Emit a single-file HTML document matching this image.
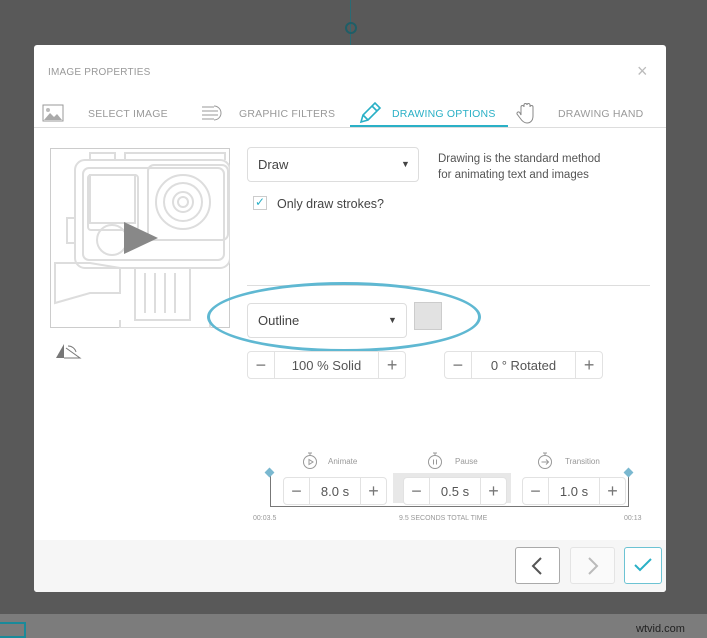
<!DOCTYPE html><html><head><style>
body{margin:0;width:707px;height:638px;background:#595959;position:relative;overflow:hidden;font-family:"Liberation Sans",sans-serif}
.a{position:absolute}
.modal{left:34px;top:45px;width:632px;height:547px;background:#fff;border-radius:3px}
.foot{left:34px;top:540px;width:632px;height:52px;background:#f6f6f6;border-radius:0 0 3px 3px}
.t{font-size:10px;color:#999;letter-spacing:.2px}
.box{border:1px solid #ddd;border-radius:4px;background:#fff}
.step{border:1px solid #e2e2e2;border-radius:4px;background:#fff;height:26px;display:flex;font-size:13px;color:#555}
.step span{display:flex;align-items:center;justify-content:center}
.sm{font-size:8px;color:#999}
</style></head><body>
<div class="a" style="left:0;top:614px;width:707px;height:24px;background:#7c7c7c"></div>
<div class="a" style="left:0;top:622px;width:26px;height:16px;border:2px solid #1a8a9a;border-left:none;box-sizing:border-box"></div>
<div class="a" style="left:636px;top:623px;font-size:11px;color:#222">wtvid.com</div>
<div class="a" style="left:350px;top:0;width:1px;height:45px;background:#2a6b75"></div>
<div class="a" style="left:345px;top:22px;width:8px;height:8px;border:2px solid #1f5e67;border-radius:50%"></div>
<div class="a modal"></div>
<div class="a foot"></div>
<div class="a t" style="left:48px;top:67px">IMAGE PROPERTIES</div>
<div class="a" style="left:637px;top:61px;font-size:18px;color:#bbb">×</div>
<div class="a" style="left:34px;top:127px;width:632px;height:1px;background:#ddd"></div>
<div class="a" style="left:350px;top:125px;width:158px;height:2px;background:#2ab0c6"></div>
<svg class="a" style="left:42px;top:104px" width="22" height="18"><rect x="1" y="1" width="20" height="16" fill="none" stroke="#999"/><path d="M2 16l6-7 4 4 3-3 5 6z" fill="#aaa"/><circle cx="6" cy="6" r="2" fill="#bbb"/></svg>
<div class="a t" style="left:88px;top:108px;font-size:10.5px">SELECT IMAGE</div>
<svg class="a" style="left:200px;top:104px" width="22" height="18"><path d="M2 3h12M2 7h16M2 11h16M2 15h12" stroke="#999"/><path d="M14 2a7 7 0 0 1 0 14" fill="none" stroke="#999"/></svg>
<div class="a t" style="left:239px;top:108px;font-size:10.5px">GRAPHIC FILTERS</div>
<svg class="a" style="left:358px;top:101px" width="24" height="24"><path d="M3 21l2-7 12-12 5 5-12 12z M5 14l5 5 M14 5l5 5" fill="none" stroke="#2ab0c6" stroke-width="1.6"/></svg>
<div class="a t" style="left:392px;top:108px;font-size:10.5px;color:#2ab0c6">DRAWING OPTIONS</div>
<svg class="a" style="left:516px;top:101px" width="22" height="24"><path d="M5 14V6a1.5 1.5 0 0 1 3 0V4a1.5 1.5 0 0 1 3 0v0a1.5 1.5 0 0 1 3 0v2a1.5 1.5 0 0 1 3 0v9c0 5-3 7-6 7s-5-2-7-5l-3-4a1.5 1.5 0 0 1 3-1z" fill="none" stroke="#888"/></svg>
<div class="a t" style="left:558px;top:108px;font-size:10.5px">DRAWING HAND</div>
<div class="a" style="left:50px;top:148px;width:180px;height:180px;border:1px solid #ccc;box-sizing:border-box"></div>
<svg class="a" style="left:50px;top:148px" width="180" height="180" fill="none" stroke="#ddd" stroke-width="2"><path d="M40 12v-7h25v7M75 12v-7h100v7"/><rect x="25" y="12" width="155" height="108" rx="10"/><rect x="33" y="20" width="141" height="92" rx="6"/><rect x="38" y="27" width="50" height="55" rx="3"/><rect x="40" y="27" width="45" height="48"/><rect x="98" y="17" width="80" height="75" rx="6"/><circle cx="133" cy="54" r="27"/><circle cx="133" cy="54" r="19"/><circle cx="133" cy="54" r="10"/><circle cx="133" cy="54" r="5"/><circle cx="62" cy="92" r="15"/><path d="M25 70h-8v25h8"/><path d="M5 115h35l30 5v25H40l-35 10z"/><path d="M85 120h55v52H85z M95 125v40M105 125v40M115 125v40M125 125v40"/><path d="M70 172v8h90v-8"/></svg>
<svg class="a" style="left:122px;top:220px" width="38" height="36"><path d="M2 2v32l34-16z" fill="#888"/></svg>
<svg class="a" style="left:54px;top:342px" width="28" height="18"><path d="M2 16l8-14v14z" fill="#777"/><path d="M10 16h16L12 6" fill="none" stroke="#777"/><path d="M14 4a8 8 0 0 1 8 6" fill="none" stroke="#777"/></svg>
<div class="a box" style="left:247px;top:147px;width:170px;height:33px"></div>
<div class="a" style="left:258px;top:157px;font-size:13px;color:#444">Draw</div>
<div class="a" style="left:401px;top:159px;font-size:9px;color:#444">▼</div>
<div class="a" style="left:438px;top:151px;font-size:11.5px;color:#555;line-height:16px">Drawing is the standard method<br>for animating text and images</div>
<div class="a" style="left:253px;top:196px;width:14px;height:14px;border:1px solid #ccc;box-sizing:border-box"></div>
<div class="a" style="left:255px;top:195px;font-size:12px;color:#2ab0c6">✓</div>
<div class="a" style="left:277px;top:197px;font-size:12.5px;color:#444">Only draw strokes?</div>
<div class="a" style="left:247px;top:285px;width:403px;height:1px;background:#ddd"></div>
<div class="a box" style="left:247px;top:303px;width:158px;height:33px"></div>
<div class="a" style="left:258px;top:313px;font-size:13px;color:#444">Outline</div>
<div class="a" style="left:388px;top:315px;font-size:9px;color:#444">▼</div>
<div class="a" style="left:414px;top:302px;width:26px;height:26px;background:#e2e2e2;border:1px solid #ccc"></div>
<div class="a" style="left:207px;top:282px;width:274px;height:70px;border:3px solid #5fb8d2;border-radius:50%;box-sizing:border-box"></div>
<div class="a step" style="left:247px;top:351px;width:157px"><span style="width:26px;font-size:18px;color:#777">−</span><span style="width:104px;border-left:1px solid #e2e2e2;border-right:1px solid #e2e2e2">100 % Solid</span><span style="width:26px;font-size:18px;color:#777">+</span></div>
<div class="a step" style="left:444px;top:351px;width:157px"><span style="width:26px;font-size:18px;color:#777">−</span><span style="width:104px;border-left:1px solid #e2e2e2;border-right:1px solid #e2e2e2">0 ° Rotated</span><span style="width:26px;font-size:18px;color:#777">+</span></div>
<div class="a" style="left:393px;top:473px;width:118px;height:30px;background:#e8e8e8"></div>
<div class="a" style="left:270px;top:474px;width:1px;height:32px;background:#777"></div>
<div class="a" style="left:628px;top:474px;width:1px;height:32px;background:#777"></div>
<div class="a" style="left:270px;top:506px;width:359px;height:1px;background:#777"></div>
<div class="a" style="left:266px;top:469px;width:7px;height:7px;background:#7ab8d0;transform:rotate(45deg)"></div>
<div class="a" style="left:625px;top:469px;width:7px;height:7px;background:#7ab8d0;transform:rotate(45deg)"></div>
<div class="a step" style="left:283px;top:477px;width:102px"><span style="width:25px;font-size:18px;color:#777">−</span><span style="width:50px;border-left:1px solid #e2e2e2;border-right:1px solid #e2e2e2">8.0 s</span><span style="width:25px;font-size:18px;color:#777">+</span></div>
<div class="a step" style="left:403px;top:477px;width:102px"><span style="width:25px;font-size:18px;color:#777">−</span><span style="width:50px;border-left:1px solid #e2e2e2;border-right:1px solid #e2e2e2">0.5 s</span><span style="width:25px;font-size:18px;color:#777">+</span></div>
<div class="a step" style="left:522px;top:477px;width:102px"><span style="width:25px;font-size:18px;color:#777">−</span><span style="width:50px;border-left:1px solid #e2e2e2;border-right:1px solid #e2e2e2">1.0 s</span><span style="width:25px;font-size:18px;color:#777">+</span></div>
<svg class="a" style="left:302px;top:452px" width="16" height="18" fill="none" stroke="#999"><circle cx="8" cy="10" r="6.5"/><path d="M6 1h4M8 1v2.5M7 7.5v5l4-2.5z"/></svg><div class="a sm" style="left:328px;top:457px">Animate</div>
<svg class="a" style="left:427px;top:452px" width="16" height="18" fill="none" stroke="#999"><circle cx="8" cy="10" r="6.5"/><path d="M6 1h4M8 1v2.5M6.5 7.5v5M9.5 7.5v5"/></svg><div class="a sm" style="left:455px;top:457px">Pause</div>
<svg class="a" style="left:537px;top:452px" width="16" height="18" fill="none" stroke="#999"><circle cx="8" cy="10" r="6.5"/><path d="M6 1h4M8 1v2.5M4.5 10h7M9 7.5l2.5 2.5-2.5 2.5"/></svg><div class="a sm" style="left:565px;top:457px">Transition</div>
<div class="a sm" style="left:253px;top:515px;font-size:7px">00:03.5</div>
<div class="a sm" style="left:399px;top:515px;font-size:7px">9.5 SECONDS TOTAL TIME</div>
<div class="a sm" style="left:624px;top:515px;font-size:7px">00:13</div>
<div class="a" style="left:515px;top:547px;width:45px;height:37px;border:1px solid #aaa;border-radius:3px;background:#fff;box-sizing:border-box"></div>
<svg class="a" style="left:530px;top:556px" width="14" height="20"><path d="M11 2l-8 8 8 8" fill="none" stroke="#555" stroke-width="2"/></svg>
<div class="a" style="left:570px;top:547px;width:45px;height:37px;border:1px solid #e4e4e4;border-radius:3px;background:#fafafa;box-sizing:border-box"></div>
<svg class="a" style="left:586px;top:556px" width="14" height="20"><path d="M3 2l8 8-8 8" fill="none" stroke="#bbb" stroke-width="2"/></svg>
<div class="a" style="left:624px;top:547px;width:38px;height:37px;border:1px solid #6cc3d3;border-radius:3px;background:#fff;box-sizing:border-box"></div>
<svg class="a" style="left:633px;top:557px" width="20" height="16"><path d="M2 8l5 5 11-11" fill="none" stroke="#2ab0c6" stroke-width="2"/></svg>
</body></html>
